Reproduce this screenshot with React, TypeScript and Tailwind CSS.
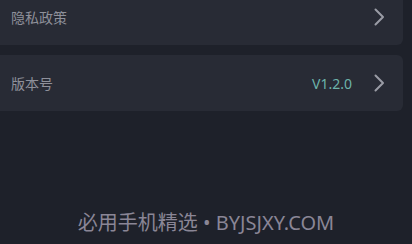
import React from 'react';

const Chevron = () => (
  <svg width="12" height="20" viewBox="0 0 12 20" fill="none" className="shrink-0">
    <path d="M2.5 2.5 L10 10 L2.5 17.5" stroke="#9a9ca5" strokeWidth="2" strokeLinecap="round" strokeLinejoin="round" />
  </svg>
);

function Row({ label, value, className }: { label: string; value?: string; className: string }) {
  return (
    <div className={`flex items-center bg-[#282b35] rounded-r-md mr-[9px] pl-[11px] pr-[18px] ${className}`}>
      <span className="flex-1 text-[14px] text-[#8e909a]">{label}</span>
      {value && <span className="text-[14px] text-[#6db3aa] mr-[21px]">{value}</span>}
      <Chevron />
    </div>
  );
}

export default function App() {
  return (
    <main
      className="w-[412px] h-[244px] overflow-hidden bg-[#1e212a] flex flex-col"
      style={{ fontFamily: '"Noto Sans", "Noto Sans CJK SC", sans-serif' }}
    >
      <Row label="隐私政策" className="h-[56px] -mt-[11px]" />
      <Row label="版本号" value="V1.2.0" className="h-[56px] mt-[10px]" />
      <div className="flex-1 flex items-end justify-center pb-[6px]">
        <p className="text-[20px] text-[#8a8696]">必用手机精选 • BYJSJXY.COM</p>
      </div>
    </main>
  );
}
